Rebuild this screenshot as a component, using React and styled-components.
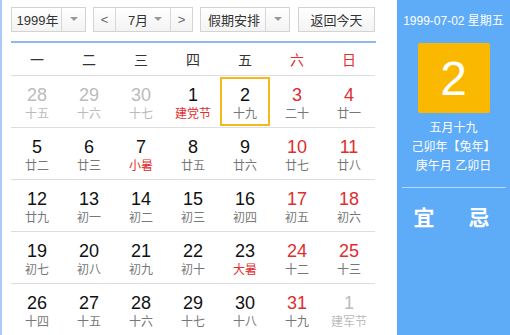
import React from 'react'
import styled, { createGlobalStyle } from 'styled-components'

const GlobalStyle = createGlobalStyle`
    body{
        margin:0;
        background:#fff;
        font-family: "Liberation Sans", "Noto Sans CJK SC", sans-serif;
    }
`;

const weekDays = ['一', '二', '三', '四', '五', '六', '日'];

// [day, lunar, kind] kind: muted = other month, fest = holiday/solar term, wk = weekend, sel = selected
const weeks = [
    [['28', '十五', 'muted'], ['29', '十六', 'muted'], ['30', '十七', 'muted'], ['1', '建党节', 'fest'], ['2', '十九', 'sel'], ['3', '二十', 'wk'], ['4', '廿一', 'wk']],
    [['5', '廿二'], ['6', '廿三'], ['7', '小暑', 'fest'], ['8', '廿五'], ['9', '廿六'], ['10', '廿七', 'wk'], ['11', '廿八', 'wk']],
    [['12', '廿九'], ['13', '初一'], ['14', '初二'], ['15', '初三'], ['16', '初四'], ['17', '初五', 'wk'], ['18', '初六', 'wk']],
    [['19', '初七'], ['20', '初八'], ['21', '初九'], ['22', '初十'], ['23', '大暑', 'fest'], ['24', '十二', 'wk'], ['25', '十三', 'wk']],
    [['26', '十四'], ['27', '十五'], ['28', '十六'], ['29', '十七'], ['30', '十八'], ['31', '十九', 'wk'], ['1', '建军节', 'mutedfest']],
];

function Caret() {
    return <svg width="8" height="5" viewBox="0 0 8 5"><path d="M0 0h8L4 4z" fill="#999" /></svg>
}

function App() {
    return (
        <Page>
            <GlobalStyle />
            <Main>
                <Toolbar>
                    <Select width={75}>
                        <SelectText>1999年</SelectText>
                        <SelectArrow><Caret /></SelectArrow>
                    </Select>
                    <MonthGroup>
                        <NavButton>&lt;</NavButton>
                        <MonthSelect>
                            <SelectText>7月</SelectText>
                            <Caret />
                        </MonthSelect>
                        <NavButton>&gt;</NavButton>
                    </MonthGroup>
                    <Select width={90}>
                        <SelectText>假期安排</SelectText>
                        <SelectArrow><Caret /></SelectArrow>
                    </Select>
                    <TodayButton>返回今天</TodayButton>
                </Toolbar>

                <WeekHeader>
                    {weekDays.map((d, i) => <WeekDay key={d} weekend={i > 4}>{d}</WeekDay>)}
                </WeekHeader>

                {weeks.map((week, wi) => (
                    <WeekRow key={wi}>
                        {week.map(([day, lunar, kind], di) => (
                            <DayCell key={di} selected={kind === 'sel'}>
                                <DayNum kind={kind}>{day}</DayNum>
                                <Lunar kind={kind}>{lunar}</Lunar>
                            </DayCell>
                        ))}
                    </WeekRow>
                ))}
            </Main>

            <Side>
                <SideDate>1999-07-02 星期五</SideDate>
                <BigDay>2</BigDay>
                <SideInfo>
                    <div>五月十九</div>
                    <div>己卯年【兔年】</div>
                    <div>庚午月 乙卯日</div>
                </SideInfo>
                <SideLine />
                <YiJi>
                    <span>宜</span>
                    <span>忌</span>
                </YiJi>
            </Side>
        </Page>
    )
}

export default App

const Page = styled.div`
    display:flex;
    width:510px;
    height:335px;
    overflow:hidden;
`;

const Main = styled.div`
    width:376px;
    border-left:2px solid #a9cbf3;
    padding:7px 0 0 9px;
    box-sizing:content-box;
    margin-right:10px;
`;

const Toolbar = styled.div`
    display:flex;
    height:25px;
    gap:7px;
    padding-bottom:9px;
    border-bottom:2px solid #8fb9ea;
    width:365px;
`;

const boxLook = `
    border:1px solid #d3d3d3;
    background:linear-gradient(#ffffff, #f3f3f3);
    box-sizing:border-box;
    height:25px;
    font-size:13px;
    color:#333;
`;

const Select = styled.div`
    ${boxLook}
    width:${p => p.width}px;
    display:flex;
    align-items:center;
`;

const SelectText = styled.span`
    flex:1;
    text-align:center;
    padding-left:2px;
`;

const SelectArrow = styled.span`
    width:23px;
    height:100%;
    border-left:1px solid #d8d8d8;
    display:flex;
    align-items:center;
    justify-content:center;
`;

const MonthGroup = styled.div`
    ${boxLook}
    width:100px;
    display:flex;
    align-items:center;
`;

const NavButton = styled.span`
    width:21px;
    height:100%;
    display:flex;
    align-items:center;
    justify-content:center;
    color:#666;
    font-size:13px;
    &:first-child{ border-right:1px solid #d8d8d8; }
    &:last-child{ border-left:1px solid #d8d8d8; }
`;

const MonthSelect = styled.span`
    flex:1;
    display:flex;
    align-items:center;
    padding-right:8px;
    >span{ padding-left:6px; }
`;

const TodayButton = styled.div`
    ${boxLook}
    width:77px;
    margin-left:1px;
    display:flex;
    align-items:center;
    justify-content:center;
`;

const WeekHeader = styled.div`
    display:grid;
    grid-template-columns:repeat(7, 52px);
    height:32px;
    border-bottom:1px solid #dedede;
    width:364px;
`;

const WeekDay = styled.div`
    display:flex;
    align-items:center;
    justify-content:center;
    font-size:14px;
    color:${p => p.weekend ? '#e02d2d' : '#333'};
`;

const WeekRow = styled.div`
    display:grid;
    grid-template-columns:repeat(7, 52px);
    height:51px;
    border-bottom:1px solid #dedede;
    width:364px;
`;

const DayCell = styled.div`
    display:flex;
    flex-direction:column;
    align-items:center;
    padding-top:6px;
    box-sizing:border-box;
    margin:1px;
    border:2px solid ${p => p.selected ? '#f7b81e' : 'transparent'};
`;

const dayColor = kind => {
    if (kind === 'muted' || kind === 'mutedfest') return '#bbb';
    if (kind === 'wk') return '#e02d2d';
    return '#111';
};

const lunarColor = kind => {
    if (kind === 'fest') return '#e02d2d';
    if (kind === 'muted' || kind === 'mutedfest') return '#bbb';
    return '#777';
};

const DayNum = styled.div`
    font-size:18px;
    line-height:20px;
    color:${p => dayColor(p.kind)};
`;

const Lunar = styled.div`
    font-size:12px;
    line-height:16px;
    margin-top:1px;
    color:${p => lunarColor(p.kind)};
`;

const Side = styled.div`
    flex:1;
    background:#5eabf7;
    display:flex;
    flex-direction:column;
    align-items:center;
    color:#fff;
    padding-top:14px;
`;

const SideDate = styled.div`
    font-size:12px;
    line-height:15px;
`;

const BigDay = styled.div`
    margin-top:14px;
    width:72px;
    height:70px;
    background:#fbb800;
    border-radius:2px;
    display:flex;
    align-items:center;
    justify-content:center;
    font-size:48px;
    font-family:"Liberation Sans", sans-serif;
`;

const SideInfo = styled.div`
    margin-top:6px;
    font-size:12px;
    line-height:19px;
    text-align:center;
`;

const SideLine = styled.div`
    margin-top:11px;
    width:104px;
    height:1px;
    background:rgba(255,255,255,0.55);
`;

const YiJi = styled.div`
    margin-top:13px;
    width:104px;
    display:flex;
    justify-content:space-between;
    padding:0 16px 0 12px;
    box-sizing:border-box;
    font-size:21px;
    font-weight:bold;
`;
